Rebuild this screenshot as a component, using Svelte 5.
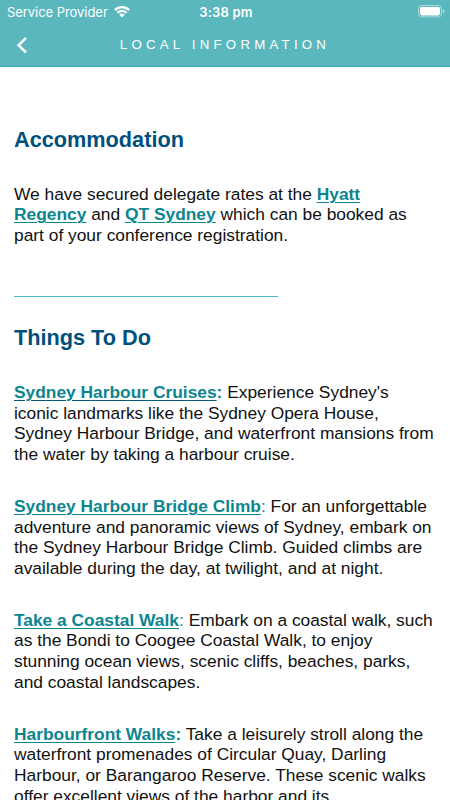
<script>
  const thingsToDo = [
    {
      name: 'Sydney Harbour Cruises',
      boldColon: true,
      dark: true,
      lines: [
        "Experience Sydney's",
        'iconic landmarks like the Sydney Opera House,',
        'Sydney Harbour Bridge, and waterfront mansions from',
        'the water by taking a harbour cruise.'
      ]
    },
    {
      name: 'Sydney Harbour Bridge Climb',
      lines: [
        'For an unforgettable',
        'adventure and panoramic views of Sydney, embark on',
        'the Sydney Harbour Bridge Climb. Guided climbs are',
        'available during the day, at twilight, and at night.'
      ]
    },
    {
      name: 'Take a Coastal Walk',
      lines: [
        'Embark on a coastal walk, such',
        'as the Bondi to Coogee Coastal Walk, to enjoy',
        'stunning ocean views, scenic cliffs, beaches, parks,',
        'and coastal landscapes.'
      ]
    },
    {
      name: 'Harbourfront Walks',
      boldColon: true,
      lines: [
        'Take a leisurely stroll along the',
        'waterfront promenades of Circular Quay, Darling',
        'Harbour, or Barangaroo Reserve. These scenic walks',
        'offer excellent views of the harbor and its'
      ]
    }
  ];
</script>

<div class="screen">
  <header class="header">
    <div class="status-bar">
      <div class="carrier">
        <span>Service Provider</span>
        <svg class="wifi" width="16" height="12" viewBox="0 0 16 12">
          <path d="M0.9 4.1 A10.2 10.2 0 0 1 15.1 4.1" />
          <path d="M3.4 6.7 A6.6 6.6 0 0 1 12.6 6.7" />
          <path class="dot" d="M5.3 8.8 A3.9 3.9 0 0 1 10.7 8.8 L8 11.6 Z" />
        </svg>
      </div>
      <div class="time">3:38 pm</div>
      <svg class="battery" width="27" height="13" viewBox="0 0 27 13">
        <rect class="case" x="0.5" y="0.5" width="23" height="11.4" rx="3.2" />
        <rect class="level" x="2" y="2" width="20" height="8.4" rx="1.8" />
        <path class="cap" d="M25 4.2 Q26.4 4.8 26.4 6.2 Q26.4 7.6 25 8.2 Z" />
      </svg>
    </div>
    <div class="nav-bar">
      <svg class="back" width="12" height="18" viewBox="0 0 12 18">
        <path d="M10 1.9 L2.6 9.2 L10 16.5" />
      </svg>
      <h1 class="title">LOCAL INFORMATION</h1>
    </div>
  </header>

  <main class="content">
    <h2>Accommodation</h2>
    <p>
      We have secured delegate rates at the <a href="#hyatt">Hyatt</a><br />
      <a href="#hyatt">Regency</a> and <a href="#qt">QT Sydney</a> which can be booked as<br />
      part of your conference registration.
    </p>

    <hr />

    <h2>Things To Do</h2>
    {#each thingsToDo as item}
      <p>
        <a href="#info" class:dark={item.dark}>{item.name}</a><span class="colon" class:bold={item.boldColon}>:</span>
        {#each item.lines as line, i}
          {line}{#if i < item.lines.length - 1}<br />{/if}
        {/each}
      </p>
    {/each}
  </main>
</div>

<style>
  :global(body) {
    margin: 0;
    background: #fff;
  }

  .screen {
    height: 800px;
    overflow: hidden;
    background: #fff;
    font-family: "Liberation Sans", Arial, sans-serif;
  }

  .header {
    box-sizing: border-box;
    height: 67px;
    background: #5ab7be;
    border-bottom: 1px solid #3fafb7;
    color: #fff;
  }

  .status-bar {
    display: grid;
    grid-template-columns: 1fr auto 1fr;
    align-items: center;
    height: 23px;
    padding: 0 5px 0 7px;
    font-family: Inter, sans-serif;
    font-size: 13px;
  }

  .carrier {
    display: flex;
    align-items: center;
    gap: 6px;
    letter-spacing: -0.05px;
  }

  .wifi path {
    fill: none;
    stroke: #fff;
    stroke-width: 2.2;
  }

  .wifi .dot {
    fill: #fff;
    stroke: none;
  }

  .time {
    font-weight: 600;
    letter-spacing: 0.2px;
  }

  .battery {
    justify-self: end;
  }

  .case {
    fill: none;
    stroke: #fff;
    stroke-opacity: 0.5;
  }

  .level {
    fill: #fff;
  }

  .cap {
    fill: #fff;
    fill-opacity: 0.6;
  }

  .nav-bar {
    display: grid;
    grid-template-columns: 40px 1fr 40px;
    align-items: center;
    height: 43px;
  }

  .back {
    margin-left: 16px;
  }

  .back path {
    fill: none;
    stroke: #fff;
    stroke-width: 2.5;
  }

  .title {
    margin: 0;
    font-family: "Liberation Sans", Arial, sans-serif;
    font-size: 13.3px;
    font-weight: 400;
    letter-spacing: 4.2px;
    text-align: center;
    white-space: nowrap;
  }

  .content {
    padding: 59px 0 0 14px;
    color: #111;
    font-size: 17.38px;
    line-height: 20.67px;
    white-space: nowrap;
  }

  h2 {
    margin: 0 0 29.6px;
    color: #00507c;
    font-size: 21.7px;
    font-weight: 700;
    line-height: 28px;
  }

  p {
    margin: 0 0 31.2px;
  }

  a {
    color: #0b858f;
    font-weight: 700;
    text-decoration: underline;
    text-decoration-thickness: 1px;
    text-underline-offset: 2px;
  }

  .dark {
    text-decoration-color: #07587a;
  }

  .colon {
    color: #0b858f;
  }

  .bold {
    font-weight: 700;
  }

  hr {
    width: 264px;
    height: 1px;
    margin: 50px 0 27.8px;
    border: 0;
    background: #4cbac4;
  }
</style>
